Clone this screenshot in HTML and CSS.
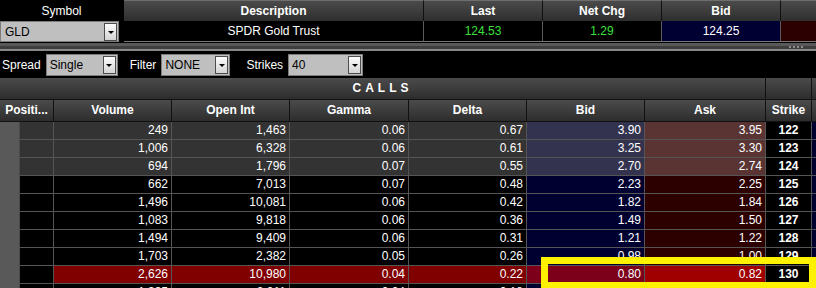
FILE: index.html
```html
<!DOCTYPE html>
<html lang="en">
<head>
  <meta charset="UTF-8">
  <title>Option Chain - GLD</title>
  <link rel="stylesheet" href="styles.css">
</head>
<body>
  <div class="quote">
    <div class="qhead sym">Symbol</div>
    <div class="qhead">Description</div>
    <div class="qhead">Last</div>
    <div class="qhead">Net Chg</div>
    <div class="qhead">Bid</div>
    <div class="qhead"></div>

    <div class="qcell symcell">
      <div class="combo gld">GLD<span class="drop"></span></div>
    </div>
    <div class="qcell">SPDR Gold Trust</div>
    <div class="qcell up">124.53</div>
    <div class="qcell up">1.29</div>
    <div class="qcell qbid">124.25</div>
    <div class="qcell qask"></div>
  </div>

  <div class="splitter"><span class="grip"></span></div>

  <div class="controls">
    <span class="label">Spread</span>
    <div class="combo spread">Single<span class="drop"></span></div>
    <span class="label filter">Filter</span>
    <div class="combo flt">NONE<span class="drop"></span></div>
    <span class="label strikes">Strikes</span>
    <div class="combo cnt">40<span class="drop"></span></div>
  </div>

  <div class="chain">
    <div class="calls">CALLS</div>
    <div class="hcell"></div>
    <div class="hcell"></div>

    <div class="hcell">Positi...</div>
    <div class="hcell">Volume</div>
    <div class="hcell">Open Int</div>
    <div class="hcell">Gamma</div>
    <div class="hcell">Delta</div>
    <div class="hcell">Bid</div>
    <div class="hcell">Ask</div>
    <div class="hcell">Strike</div>
    <div class="hcell"></div>

    <!-- in the money -->
    <div class="c pos itm"></div><div class="c itm">249</div><div class="c itm">1,463</div><div class="c itm">0.06</div><div class="c itm">0.67</div><div class="c b-itm">3.90</div><div class="c a-itm">3.95</div><div class="c k">122</div><div class="c put"></div>
    <div class="c pos itm"></div><div class="c itm">1,006</div><div class="c itm">6,328</div><div class="c itm">0.06</div><div class="c itm">0.61</div><div class="c b-itm">3.25</div><div class="c a-itm">3.30</div><div class="c k">123</div><div class="c put"></div>
    <div class="c pos itm"></div><div class="c itm">694</div><div class="c itm">1,796</div><div class="c itm">0.07</div><div class="c itm">0.55</div><div class="c b-itm">2.70</div><div class="c a-itm">2.74</div><div class="c k">124</div><div class="c put"></div>

    <!-- out of the money -->
    <div class="c pos"></div><div class="c">662</div><div class="c">7,013</div><div class="c">0.07</div><div class="c">0.48</div><div class="c bid">2.23</div><div class="c ask">2.25</div><div class="c k">125</div><div class="c put"></div>
    <div class="c pos"></div><div class="c">1,496</div><div class="c">10,081</div><div class="c">0.06</div><div class="c">0.42</div><div class="c bid">1.82</div><div class="c ask">1.84</div><div class="c k">126</div><div class="c put"></div>
    <div class="c pos"></div><div class="c">1,083</div><div class="c">9,818</div><div class="c">0.06</div><div class="c">0.36</div><div class="c bid">1.49</div><div class="c ask">1.50</div><div class="c k">127</div><div class="c put"></div>
    <div class="c pos"></div><div class="c">1,494</div><div class="c">9,409</div><div class="c">0.06</div><div class="c">0.31</div><div class="c bid">1.21</div><div class="c ask">1.22</div><div class="c k">128</div><div class="c put"></div>
    <div class="c pos"></div><div class="c">1,703</div><div class="c">2,382</div><div class="c">0.05</div><div class="c">0.26</div><div class="c bid">0.98</div><div class="c ask">1.00</div><div class="c k">129</div><div class="c put"></div>
    <div class="c pos"></div><div class="c hl">2,626</div><div class="c hl">10,980</div><div class="c hl">0.04</div><div class="c hl">0.22</div><div class="c b-hl">0.80</div><div class="c a-hl">0.82</div><div class="c k">130</div><div class="c put"></div>
    <div class="c pos"></div><div class="c">1,335</div><div class="c">2,011</div><div class="c">0.04</div><div class="c">0.18</div><div class="c bid">0.65</div><div class="c ask">0.67</div><div class="c k">131</div><div class="c put"></div>
  </div>

  <div class="marker"></div>
</body>
</html>
```

FILE: styles.css
```css
body {
  margin: 0;
  width: 816px;
  height: 288px;
  overflow: hidden;
  position: relative;
  background-color: #000;
  color: #fff;
  font-family: "Liberation Sans", Arial, sans-serif;
  font-size: 12px;
}

/* quote strip */
.quote {
  display: grid;
  grid-template-columns: 124px 300px 119px 119px 119px 60px;
}

.qhead {
  height: 21px;
  box-sizing: border-box;
  background: linear-gradient(#4b4b4b, #2e2e2e);
  border-top: 1px solid #6e6e6e;
  border-right: 1px solid #111;
  text-align: center;
  font-weight: bold;
  line-height: 20px;
}

.qhead.sym {
  background: #000;
  border-top-color: #000;
  border-right-color: #000;
  font-weight: normal;
}

.qcell {
  height: 21px;
  box-sizing: border-box;
  border-right: 1px solid #5a5a5a;
  border-bottom: 1px solid #777;
  text-align: center;
  line-height: 20px;
}

.qcell.symcell {
  border: none;
}

.up {
  color: #3be03b;
}

.qbid {
  background-color: #000033;
}

.qask {
  background-color: #2c0000;
}

/* combo boxes */
.combo {
  display: flex;
  align-items: center;
  justify-content: space-between;
  box-sizing: border-box;
  height: 22px;
  padding-left: 3px;
  background-color: #bfbfbf;
  border: 1px solid #7c7c7c;
  color: #000;
}

.combo.gld {
  width: 119px;
  height: 21px;
  padding-left: 4px;
}

.combo.spread { width: 72px; }
.combo.flt { width: 69px; }
.combo.cnt { width: 75px; }

.drop {
  width: 13px;
  height: 18px;
  margin-right: 1px;
  box-sizing: border-box;
  background: linear-gradient(#fbfbfb, #d4d4d4);
  border: 1px solid #4c4c4c;
  display: flex;
  justify-content: center;
  align-items: flex-end;
  padding-bottom: 6px;
}

.drop::after {
  content: "";
  width: 0;
  height: 0;
  border-left: 3px solid transparent;
  border-right: 3px solid transparent;
  border-top: 3px solid #000;
}

/* splitter between panes */
.splitter {
  height: 9px;
  background: linear-gradient(#000 0 1px, #585858 1px 4px, #3e3e3e 4px 7px, #888 7px 9px);
  display: flex;
  justify-content: flex-end;
}

.grip {
  width: 14px;
  height: 2px;
  margin: 4px 13px 0 0;
  background: repeating-linear-gradient(to right, #8c8c8c 0 2px, transparent 2px 4px);
}

/* controls */
.controls {
  height: 27px;
  display: flex;
  align-items: center;
  padding-left: 2px;
}

.label {
  margin-right: 5px;
}

.label.filter {
  margin-left: 12px;
}

.label.strikes {
  margin-left: 16px;
}

/* option chain */
.chain {
  display: grid;
  grid-template-columns: 54px 118px 118px 119px 118px 118px 121px 46px 60px;
}

.calls {
  grid-column: 1 / 8;
  height: 22px;
  box-sizing: border-box;
  background: linear-gradient(#4b4b4b, #2d2d2d);
  border-right: 1px solid #111;
  border-bottom: 1px solid #111;
  text-align: center;
  font-weight: bold;
  letter-spacing: 4px;
  line-height: 21px;
}

.hcell {
  height: 22px;
  box-sizing: border-box;
  background: linear-gradient(#4b4b4b, #2d2d2d);
  border-right: 1px solid #111;
  border-bottom: 1px solid #111;
  text-align: center;
  font-weight: bold;
  line-height: 21px;
  white-space: nowrap;
  overflow: hidden;
}

.c {
  height: 18px;
  box-sizing: border-box;
  padding-right: 3px;
  background-color: #000;
  border-right: 1px solid #555;
  border-bottom: 1px solid #555;
  text-align: right;
  line-height: 17px;
}

.c.pos {
  border-bottom: none;
  background:
    linear-gradient(to right, #4a4a4a, #4a4a4a) 19px 0 / 1px 100% no-repeat,
    linear-gradient(to right, #595959, #595959) 0 0 / 19px 100% no-repeat,
    linear-gradient(#555, #555) right bottom / 34px 1px no-repeat,
    #000;
}

.c.pos.itm {
  background:
    linear-gradient(to right, #4a4a4a, #4a4a4a) 19px 0 / 1px 100% no-repeat,
    linear-gradient(to right, #595959, #595959) 0 0 / 19px 100% no-repeat,
    linear-gradient(#555, #555) right bottom / 34px 1px no-repeat,
    #333;
}

.c.itm { background-color: #333; }
.c.b-itm { background-color: #34334f; }
.c.a-itm { background-color: #593433; }

.c.bid { background-color: #000030; }
.c.ask { background-color: #2d0000; }

.c.hl { background-color: #800000; }
.c.b-hl { background-color: #7c0019; }
.c.a-hl { background-color: #a00000; }

.c.k {
  text-align: center;
  padding-right: 0;
  font-weight: bold;
}

.c.put {
  background-color: #00002e;
}

/* highlight annotation drawn over the chain */
.marker {
  position: absolute;
  left: 541px;
  top: 257px;
  width: 275px;
  height: 32px;
  box-sizing: border-box;
  border: 7px solid #fff200;
}
```
